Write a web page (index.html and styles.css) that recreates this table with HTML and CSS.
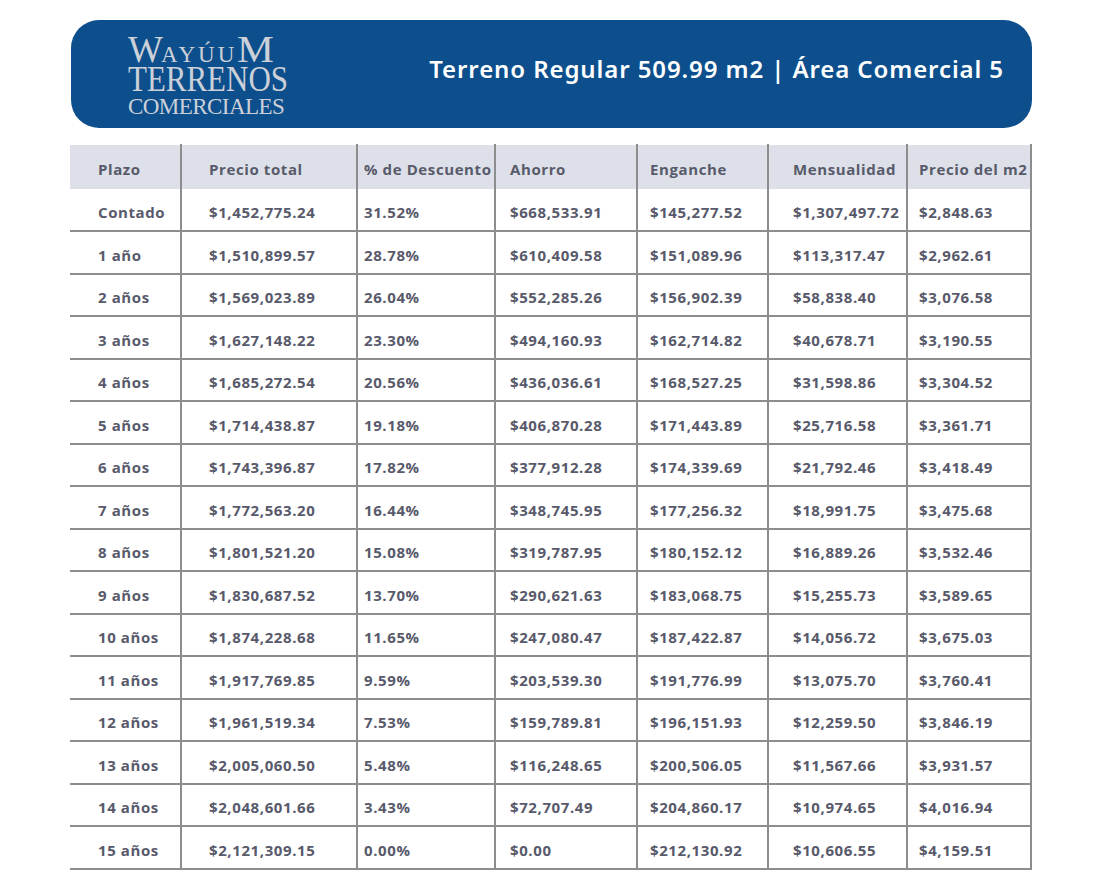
FILE: index.html
```html
<!DOCTYPE html>
<html lang="es">
<head>
<meta charset="utf-8">
<title>Terreno Regular 509.99 m2 | Área Comercial 5</title>
<link rel="stylesheet" href="styles.css">
</head>
<body>
<header class="banner">
  <div class="logo">
    <div class="logo-top"><span class="big">W</span>AYÚU<span class="big">M</span></div>
    <div class="logo-mid">TERRENOS</div>
    <div class="logo-bot">COMERCIALES</div>
  </div>
  <h1 class="title">Terreno Regular 509.99 m2 | Área Comercial 5</h1>
</header>
<table class="prices">
  <colgroup>
    <col class="c1"><col class="c2"><col class="c3"><col class="c4"><col class="c5"><col class="c6"><col class="c7">
  </colgroup>
  <thead>
    <tr><th>Plazo</th><th>Precio total</th><th>% de Descuento</th><th>Ahorro</th><th>Enganche</th><th>Mensualidad</th><th>Precio del m2</th></tr>
  </thead>
  <tbody>
    <tr><td>Contado</td><td>$1,452,775.24</td><td>31.52%</td><td>$668,533.91</td><td>$145,277.52</td><td>$1,307,497.72</td><td>$2,848.63</td></tr>
    <tr><td>1 año</td><td>$1,510,899.57</td><td>28.78%</td><td>$610,409.58</td><td>$151,089.96</td><td>$113,317.47</td><td>$2,962.61</td></tr>
    <tr><td>2 años</td><td>$1,569,023.89</td><td>26.04%</td><td>$552,285.26</td><td>$156,902.39</td><td>$58,838.40</td><td>$3,076.58</td></tr>
    <tr><td>3 años</td><td>$1,627,148.22</td><td>23.30%</td><td>$494,160.93</td><td>$162,714.82</td><td>$40,678.71</td><td>$3,190.55</td></tr>
    <tr><td>4 años</td><td>$1,685,272.54</td><td>20.56%</td><td>$436,036.61</td><td>$168,527.25</td><td>$31,598.86</td><td>$3,304.52</td></tr>
    <tr><td>5 años</td><td>$1,714,438.87</td><td>19.18%</td><td>$406,870.28</td><td>$171,443.89</td><td>$25,716.58</td><td>$3,361.71</td></tr>
    <tr><td>6 años</td><td>$1,743,396.87</td><td>17.82%</td><td>$377,912.28</td><td>$174,339.69</td><td>$21,792.46</td><td>$3,418.49</td></tr>
    <tr><td>7 años</td><td>$1,772,563.20</td><td>16.44%</td><td>$348,745.95</td><td>$177,256.32</td><td>$18,991.75</td><td>$3,475.68</td></tr>
    <tr><td>8 años</td><td>$1,801,521.20</td><td>15.08%</td><td>$319,787.95</td><td>$180,152.12</td><td>$16,889.26</td><td>$3,532.46</td></tr>
    <tr><td>9 años</td><td>$1,830,687.52</td><td>13.70%</td><td>$290,621.63</td><td>$183,068.75</td><td>$15,255.73</td><td>$3,589.65</td></tr>
    <tr><td>10 años</td><td>$1,874,228.68</td><td>11.65%</td><td>$247,080.47</td><td>$187,422.87</td><td>$14,056.72</td><td>$3,675.03</td></tr>
    <tr><td>11 años</td><td>$1,917,769.85</td><td>9.59%</td><td>$203,539.30</td><td>$191,776.99</td><td>$13,075.70</td><td>$3,760.41</td></tr>
    <tr><td>12 años</td><td>$1,961,519.34</td><td>7.53%</td><td>$159,789.81</td><td>$196,151.93</td><td>$12,259.50</td><td>$3,846.19</td></tr>
    <tr><td>13 años</td><td>$2,005,060.50</td><td>5.48%</td><td>$116,248.65</td><td>$200,506.05</td><td>$11,567.66</td><td>$3,931.57</td></tr>
    <tr><td>14 años</td><td>$2,048,601.66</td><td>3.43%</td><td>$72,707.49</td><td>$204,860.17</td><td>$10,974.65</td><td>$4,016.94</td></tr>
    <tr><td>15 años</td><td>$2,121,309.15</td><td>0.00%</td><td>$0.00</td><td>$212,130.92</td><td>$10,606.55</td><td>$4,159.51</td></tr>
  </tbody>
</table>
</body>
</html>
```
FILE: styles.css
```css
* { box-sizing: border-box; }
html, body { margin: 0; padding: 0; background: #ffffff; }
body { width: 1098px; height: 892px; overflow: hidden; }

.banner {
  margin: 20px 0 0 71px;
  width: 961px;
  height: 108px;
  border-radius: 28px;
  background: #0d4f8d;
  display: flex;
  align-items: center;
  justify-content: space-between;
  padding: 0 28px 0 57px;
}

.logo {
  font-family: "Liberation Serif", "Times New Roman", serif;
  color: #ccd0d8;
  display: flex;
  flex-direction: column;
  align-items: flex-start;
  padding-top: 6px;
}
.logo-top {
  font-size: 23px;
  letter-spacing: 3px;
  line-height: 26px;
  height: 28px;
  white-space: nowrap;
}
.logo-top .big { font-size: 37px; letter-spacing: 1px; }
.logo-top .big:first-child { letter-spacing: -2px; }
.logo-top .big:last-child { display: inline-block; transform: scaleX(1.12); transform-origin: left bottom; }
.logo-mid {
  font-size: 36px;
  letter-spacing: 0;
  line-height: 29px;
  height: 29px;
  white-space: nowrap;
  transform: scaleX(0.86);
  transform-origin: left center;
}
.logo-bot {
  font-size: 24px;
  letter-spacing: -0.6px;
  line-height: 24px;
  height: 24px;
  white-space: nowrap;
  transform: scaleX(0.96);
  transform-origin: left center;
}

.title {
  margin: 0 0 10px 0;
  font-family: "Noto Sans", "Open Sans", sans-serif;
  font-weight: 600;
  font-size: 24px;
  line-height: 32px;
  color: #ffffff;
  letter-spacing: 0.9px;
}

.prices {
  margin: 16px 0 0 70px;
  width: 961px;
  border-collapse: collapse;
  table-layout: fixed;
  font-family: "Open Sans", "Noto Sans", sans-serif;
  font-weight: 700;
  font-size: 15px;
  letter-spacing: 0.6px;
  color: #585a6b;
}
.c1 { width: 111px; }
.c2 { width: 176px; }
.c3 { width: 138px; }
.c4 { width: 142px; }
.c5 { width: 131px; }
.c6 { width: 139px; }
.c7 { width: 124px; }

.prices th, .prices td {
  text-align: left;
  vertical-align: middle;
  border-right: 2px solid #8d8d8d;
  white-space: nowrap;
  padding: 5px 0 0 0;
}
.prices th {
  background: #dde0e8;
  height: 44px;
  font-weight: 700;
  border-top: 1px solid #ffffff;
}
.prices td {
  height: 42.5px;
  border-bottom: 2px solid #8d8d8d;
}
.prices th:nth-child(1), .prices td:nth-child(1) { padding-left: 28px; }
.prices th:nth-child(2), .prices td:nth-child(2) { padding-left: 27px; }
.prices th:nth-child(3), .prices td:nth-child(3) { padding-left: 6px; }
.prices th:nth-child(4), .prices td:nth-child(4) { padding-left: 14px; }
.prices th:nth-child(5), .prices td:nth-child(5) { padding-left: 12px; }
.prices th:nth-child(6), .prices td:nth-child(6) { padding-left: 24px; }
.prices th:nth-child(7), .prices td:nth-child(7) { padding-left: 11px; }
```
